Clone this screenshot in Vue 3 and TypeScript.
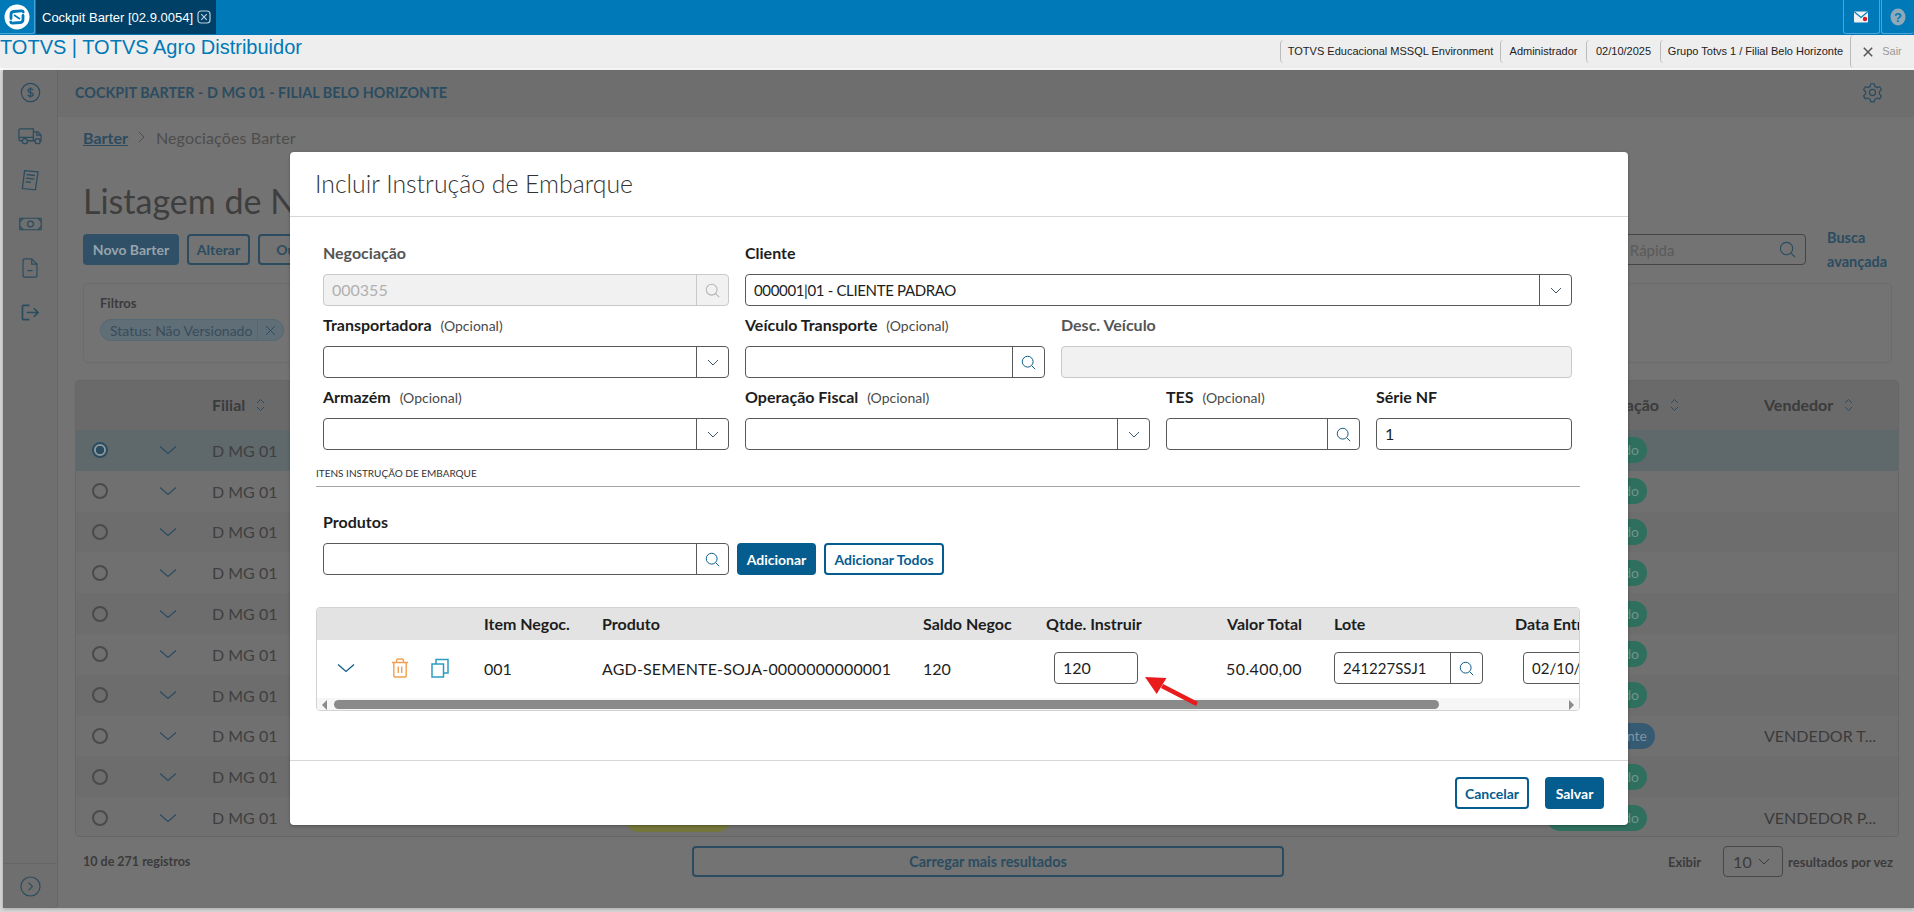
<script setup lang="ts">
interface Row { pill: string; kind: string; vendor: string; extra?: boolean }
const rows: Row[] = [
  { pill: 'Aprovado', kind: 'green', vendor: '' },
  { pill: 'Aprovado', kind: 'green', vendor: '' },
  { pill: 'Aprovado', kind: 'green', vendor: '' },
  { pill: 'Aprovado', kind: 'green', vendor: '' },
  { pill: 'Aprovado', kind: 'green', vendor: '' },
  { pill: 'Aprovado', kind: 'green', vendor: '' },
  { pill: 'Aprovado', kind: 'green', vendor: '' },
  { pill: 'Pendente', kind: 'blue', vendor: 'VENDEDOR T...' },
  { pill: 'Aprovado', kind: 'green', vendor: '' },
  { pill: 'Aprovado', kind: 'green', vendor: 'VENDEDOR P...', extra: true },
]
</script>

<template>
  <div class="screen">
    <header class="topbar">
      <div class="logo-cell">
        <svg width="26" height="26" viewBox="0 0 26 26">
          <circle cx="13" cy="13" r="12.5" fill="#fff" />
          <path d="M7 14.500V10.500Q7 7.800 9.600 7.500L17.500 6.800Q19 6.700 19.300 8M19 11.500V15.500Q19 18.200 16.400 18.500L8.500 19.200Q7 19.300 6.700 18" fill="none" stroke="#0079b8" stroke-width="2.800" stroke-linecap="round" />
          <path d="M10 11 16 15" fill="none" stroke="#0079b8" stroke-width="1.600" />
        </svg>
      </div>
      <div class="tab">
        <span>Cockpit Barter [02.9.0054]</span>
        <svg width="14" height="14" viewBox="0 0 14 14" fill="none" stroke="#b9cfdc" stroke-width="1.2">
          <rect x="1" y="1" width="12" height="12" rx="3" />
          <path d="M4.2 4.2 9.8 9.8M9.8 4.2 4.2 9.8" />
        </svg>
      </div>
      <div class="top-spacer"></div>
      <div class="top-btn">
        <svg width="15" height="12" viewBox="0 0 15 12">
          <rect width="14" height="11" y="0.5" rx="1" fill="#f1f1f1" />
          <path d="M0.5 1 7 6.5 13.5 1" fill="none" stroke="#0079b8" stroke-width="1.1" />
          <circle cx="11" cy="8" r="2.2" fill="#e01b24" />
        </svg>
      </div>
      <div class="top-btn help">
        <svg width="16" height="18" viewBox="0 0 16 18">
          <ellipse cx="8" cy="9" rx="7.5" ry="8.5" fill="#8fa9b9" />
          <text x="8" y="14" text-anchor="middle" class="help-q">?</text>
        </svg>
      </div>
    </header>

    <div class="subbar">
      <div class="brand">TOTVS | TOTVS Agro Distribuidor</div>
      <div class="sub-items">
        <span class="sub-item w1">TOTVS Educacional MSSQL Environment</span>
        <span class="sub-item w2">Administrador</span>
        <span class="sub-item w3">02/10/2025</span>
        <span class="sub-item w4">Grupo Totvs 1 / Filial Belo Horizonte</span>
        <span class="sub-item exit">
          <svg width="10" height="10" viewBox="0 0 10 10" fill="none" stroke="#555" stroke-width="1.5"><path d="M.8.8 9.2 9.2M9.2.8.8 9.2" /></svg>
          <em>Sair</em>
        </span>
      </div>
    </div>

    <div class="app">
      <aside class="sidebar">
        <div class="side-icons">
          <span class="si"><svg width="21" height="21" viewBox="0 0 24 24" fill="none" stroke="#2b4c60" stroke-width="1.400">
            <circle cx="12" cy="12" r="10.500" />
            <path d="M15 9.300c-.5-1-1.600-1.500-3-1.500-1.700 0-3 .8-3 2.100 0 3 6.200 1.300 6.200 4.400 0 1.300-1.400 2-3.200 2-1.500 0-2.700-.6-3.200-1.700M12 6v12" />
          </svg></span>
          <span class="si"><svg width="24" height="17" viewBox="0 0 28 20" fill="none" stroke="#2b4c60" stroke-width="1.500">
            <path d="M5 15H2.500A1.500 1.500 0 0 1 1 13.500V2.500A1.500 1.500 0 0 1 2.500 1h15.500v14H11M18 4.500h5.500l3.500 4V15h-1M18 15h2.500M1 11h17M22 4.500v4h5" />
            <circle cx="8" cy="15.500" r="3" /><circle cx="23" cy="15.500" r="3" />
          </svg></span>
          <span class="si"><svg width="18" height="22" viewBox="0 0 20 24" fill="none" stroke="#2b4c60" stroke-width="1.400">
            <path d="M4 1.500 19 3 16 23 1.500 21.500Z" />
            <path d="M6 6 15.500 7M5.500 10 15 11M5 14l6 .5" />
          </svg></span>
          <span class="si"><svg width="23" height="14" viewBox="0 0 28 16" fill="none" stroke="#2b4c60" stroke-width="1.500">
            <path d="M7 1H1v14h6M21 1h6v14h-6M7 1h14M7 15h14" />
            <circle cx="14" cy="8" r="3.500" />
            <path d="M1 5l4-4M27 5l-4-4M1 11l4 4M27 11l-4 4" />
          </svg></span>
          <span class="si"><svg width="16" height="20" viewBox="0 0 18 23" fill="none" stroke="#2b4c60" stroke-width="1.400">
            <path d="M11 1H2.500A1.500 1.500 0 0 0 1 2.500v18A1.500 1.500 0 0 0 2.500 22h13a1.500 1.500 0 0 0 1.500-1.500V7ZM11 1v6h6M6 14.500h6" />
          </svg></span>
          <span class="si"><svg width="19" height="17" viewBox="0 0 20 18" fill="none" stroke="#2b4c60" stroke-width="1.800">
            <path d="M9 1.500H2.500a1 1 0 0 0-1 1v13a1 1 0 0 0 1 1H9M6 9h12M13.500 4.500 18 9l-4.500 4.500" />
          </svg></span>
        </div>
        <div class="side-foot">
          <svg width="21" height="21" viewBox="0 0 22 22" fill="none" stroke="#2b4c60" stroke-width="1.200">
            <circle cx="11" cy="11" r="10" /><path d="m9 7 4 4-4 4" />
          </svg>
        </div>
      </aside>

      <main class="main">
        <div class="main-head">
          <span>COCKPIT BARTER - D MG 01 - FILIAL BELO HORIZONTE</span>
          <svg width="21" height="21" viewBox="0 0 24 24" fill="none" stroke="#2b4c60" stroke-width="1.400">
            <circle cx="12" cy="12" r="3.500" />
            <path d="M10 2h4l.7 3 2.500 1.400 3-1 2 3.400-2.300 2.100v2.900l2.300 2.100-2 3.400-3-1-2.500 1.400-.7 3h-4l-.7-3-2.500-1.400-3 1-2-3.400 2.300-2.100v-2.900L1.800 8.800l2-3.400 3 1 2.500-1.400Z" stroke-linejoin="round" />
          </svg>
        </div>
        <div class="crumb">
          <a>Barter</a>
          <svg width="10" height="14" viewBox="0 0 10 14" fill="none" stroke="#4d4d4d" stroke-width="1"><path d="m2 2 5 5-5 5" /></svg>
          <span>Negociações Barter</span>
        </div>
        <h1 class="page-title">Listagem de Negociações</h1>
        <div class="actions">
          <div class="act-left">
            <button class="bg-btn solid">Novo Barter</button>
            <button class="bg-btn w-alt">Alterar</button>
            <button class="bg-btn w-out">Outras Ações</button>
          </div>
          <div class="quick">
            <span>Busca Rápida</span>
            <svg width="17" height="17" viewBox="0 0 18 18" fill="none" stroke="#2b4c60" stroke-width="1.200"><circle cx="8" cy="8" r="6.500" /><path d="m13 13 4 4" /></svg>
          </div>
          <a class="adv">Busca<br />avançada</a>
        </div>
        <section class="filters">
          <b>Filtros</b>
          <div class="chip">
            <span>Status: Não Versionado</span>
            <i><svg width="11" height="11" viewBox="0 0 11 11" fill="none" stroke="#2b4c60" stroke-width="1"><path d="m1 1 9 9M10 1l-9 9" /></svg></i>
          </div>
        </section>
        <section class="grid">
          <div class="g-head g-row">
            <span></span><span></span>
            <span class="sortable">Filial
              <svg width="9" height="14" viewBox="0 0 9 14" fill="none" stroke="#2b4c60" stroke-width="1"><path d="m1 5 3.500-3.500L8 5M1 9l3.500 3.500L8 9" /></svg>
            </span>
            <span></span>
            <span class="sortable">Situação
              <svg width="9" height="14" viewBox="0 0 9 14" fill="none" stroke="#2b4c60" stroke-width="1"><path d="m1 5 3.500-3.500L8 5M1 9l3.500 3.500L8 9" /></svg>
            </span>
            <span class="sortable">Vendedor
              <svg width="9" height="14" viewBox="0 0 9 14" fill="none" stroke="#2b4c60" stroke-width="1"><path d="m1 5 3.500-3.500L8 5M1 9l3.500 3.500L8 9" /></svg>
            </span>
          </div>
          <div v-for="(r, i) in rows" :key="i" class="g-row g-body" :class="{ sel: i === 0, odd: i % 2 === 1 }">
            <span class="radio" :class="{ on: i === 0 }"></span>
            <svg class="row-chev" width="18" height="10" viewBox="0 0 18 10" fill="none" stroke="#2b4c60" stroke-width="1.200"><path d="m1 1.500 8 7 8-7" /></svg>
            <span class="filial">D MG 01</span>
            <span class="mid"><em v-if="r.extra" class="yellow">Vigente</em></span>
            <span class="pill-cell"><em class="pill" :class="r.kind">{{ r.pill }}</em></span>
            <span class="vendor">{{ r.vendor }}</span>
          </div>
        </section>
        <footer class="foot">
          <span class="count">10 de 271 registros</span>
          <button class="more">Carregar mais resultados</button>
          <div class="per">
            <span>Exibir</span>
            <div class="per-sel"><span>10</span>
              <svg width="12" height="7" viewBox="0 0 12 7" fill="none" stroke="#3a3a3a" stroke-width="1"><path d="m1 1 5 5 5-5" /></svg>
            </div>
            <span>resultados por vez</span>
          </div>
        </footer>
      </main>
    </div>

    <div class="modal">
      <div class="m-head">Incluir Instrução de Embarque</div>
      <div class="m-body">
        <div class="f-row r1">
          <div class="field disabled">
            <label>Negociação</label>
            <div class="ctl"><span class="val">000355</span>
              <i class="addon"><svg width="15" height="15" viewBox="0 0 18 18" fill="none" stroke="#b5b5b5" stroke-width="1.300"><circle cx="8" cy="8" r="6.500" /><path d="m13 13 4 4" /></svg></i>
            </div>
          </div>
          <div class="field">
            <label>Cliente</label>
            <div class="ctl"><span class="val cli">000001|01 - CLIENTE PADRAO</span>
              <i class="addon"><svg width="12" height="7" viewBox="0 0 12 7" fill="none" stroke="#3d5a6c" stroke-width="1"><path d="m1 1 5 5 5-5" /></svg></i>
            </div>
          </div>
        </div>
        <div class="f-row r2">
          <div class="field">
            <label>Transportadora <small>(Opcional)</small></label>
            <div class="ctl"><span class="val"></span>
              <i class="addon"><svg width="12" height="7" viewBox="0 0 12 7" fill="none" stroke="#3d5a6c" stroke-width="1"><path d="m1 1 5 5 5-5" /></svg></i>
            </div>
          </div>
          <div class="field">
            <label>Veículo Transporte <small>(Opcional)</small></label>
            <div class="ctl"><span class="val"></span>
              <i class="addon"><svg width="15" height="15" viewBox="0 0 18 18" fill="none" stroke="#0c5c88" stroke-width="1.200"><circle cx="8" cy="8" r="6.500" /><path d="m13 13 4 4" /></svg></i>
            </div>
          </div>
          <div class="field disabled">
            <label>Desc. Veículo</label>
            <div class="ctl"><span class="val"></span></div>
          </div>
        </div>
        <div class="f-row r3">
          <div class="field">
            <label>Armazém <small>(Opcional)</small></label>
            <div class="ctl"><span class="val"></span>
              <i class="addon"><svg width="12" height="7" viewBox="0 0 12 7" fill="none" stroke="#3d5a6c" stroke-width="1"><path d="m1 1 5 5 5-5" /></svg></i>
            </div>
          </div>
          <div class="field">
            <label>Operação Fiscal <small>(Opcional)</small></label>
            <div class="ctl"><span class="val"></span>
              <i class="addon"><svg width="12" height="7" viewBox="0 0 12 7" fill="none" stroke="#3d5a6c" stroke-width="1"><path d="m1 1 5 5 5-5" /></svg></i>
            </div>
          </div>
          <div class="field">
            <label>TES <small>(Opcional)</small></label>
            <div class="ctl"><span class="val"></span>
              <i class="addon"><svg width="15" height="15" viewBox="0 0 18 18" fill="none" stroke="#0c5c88" stroke-width="1.200"><circle cx="8" cy="8" r="6.500" /><path d="m13 13 4 4" /></svg></i>
            </div>
          </div>
          <div class="field">
            <label>Série NF</label>
            <div class="ctl"><span class="val">1</span></div>
          </div>
        </div>
        <div class="section-title">ITENS INSTRUÇÃO DE EMBARQUE</div>
        <div class="prod">
          <label>Produtos</label>
          <div class="prod-line">
            <div class="ctl prod-ctl"><span class="val"></span>
              <i class="addon"><svg width="15" height="15" viewBox="0 0 18 18" fill="none" stroke="#0c5c88" stroke-width="1.200"><circle cx="8" cy="8" r="6.500" /><path d="m13 13 4 4" /></svg></i>
            </div>
            <button class="btn primary add">Adicionar</button>
            <button class="btn outline addall">Adicionar Todos</button>
          </div>
        </div>
        <div class="items">
          <div class="i-row i-head">
            <span></span><span>Item Negoc.</span><span>Produto</span><span>Saldo Negoc</span><span>Qtde. Instruir</span><span class="right">Valor Total</span><span>Lote</span><span class="clip">Data Entrega</span>
          </div>
          <div class="i-row i-data">
            <span class="row-actions">
              <svg class="a1" width="18" height="10" viewBox="0 0 18 10" fill="none" stroke="#0c5c88" stroke-width="1.300"><path d="m1 1.500 8 7 8-7" /></svg>
              <svg class="a2" width="18" height="20" viewBox="0 0 18 20" fill="none" stroke="#f0a04e" stroke-width="1.400">
                <path d="M1 4.500h16M2.800 4.500V18a1 1 0 0 0 1 1h10.400a1 1 0 0 0 1-1V4.500M5.500 4.500V3a2 2 0 0 1 2-2h3a2 2 0 0 1 2 2v1.500M7.300 8.500v6.500M10.700 8.500v6.500" />
              </svg>
              <svg class="a3" width="18" height="20" viewBox="0 0 18 20" fill="none" stroke="#2a9cc4" stroke-width="1.500">
                <rect x="1" y="6" width="11.500" height="13" /><path d="M5 6V1.500h12V15h-4.500" />
              </svg>
            </span>
            <span>001</span>
            <span class="prod-name">AGD-SEMENTE-SOJA-0000000000001</span>
            <span>120</span>
            <span class="pad"><div class="ctl qty"><span class="val">120</span></div></span>
            <span class="right money">50.400,00</span>
            <span><div class="ctl lote"><span class="val small-val">241227SSJ1</span>
              <i class="addon"><svg width="15" height="15" viewBox="0 0 18 18" fill="none" stroke="#0c5c88" stroke-width="1.200"><circle cx="8" cy="8" r="6.500" /><path d="m13 13 4 4" /></svg></i>
            </div></span>
            <span class="pad clip"><div class="ctl date"><span class="val small-val">02/10/2025</span></div></span>
          </div>
          <div class="scroll">
            <i class="arrow left"></i>
            <div class="track"><div class="thumb"></div></div>
            <i class="arrow rgt"></i>
          </div>
        </div>
      </div>
      <div class="m-foot">
        <button class="btn outline cancel">Cancelar</button>
        <button class="btn primary save">Salvar</button>
      </div>
    </div>

    <svg class="callout" width="62" height="38" viewBox="0 0 62 38">
      <path d="M22 14 57 32" stroke="#e81c1c" stroke-width="4.500" fill="none" />
      <path d="M5 5 26.500 6 16.700 22Z" fill="#e81c1c" />
    </svg>
  </div>
</template>

<style>
html, body { margin: 0; background: #d9d9d9; overflow: hidden; }
</style>

<style scoped>
.screen { position: relative; width: 1914px; height: 912px; overflow: hidden; font-family: "Lato", "Noto Sans", sans-serif; color: #1d1d1d; }
button { font-family: inherit; cursor: pointer; }
i, em { font-style: normal; }

.topbar { display: flex; height: 35px; background: #0079b8; }
.logo-cell { width: 35px; height: 34px; display: flex; align-items: center; justify-content: center; border-right: 1px solid #4aa6da; border-bottom: 1px solid #4aa6da; box-sizing: border-box; border-radius: 0 0 3px 0; }
.tab { margin-left: 1px; width: 180px; height: 34px; background: #003f66; color: #fff; display: flex; align-items: center; padding-left: 6px; gap: 4px; box-sizing: border-box; font: 13px "Liberation Sans", sans-serif; white-space: nowrap; }
.top-spacer { flex: 1; }
.top-btn { width: 37px; height: 34px; display: flex; align-items: center; justify-content: center; border: 1px solid #4aa6da; border-top: 0; box-sizing: border-box; border-radius: 0 0 3px 3px; margin-right: 1px; }
.top-btn.help { width: 33px; margin: 0; border-right: 0; }
.help-q { font: bold 13px "Liberation Sans", sans-serif; fill: #0079b8; }

.subbar { height: 33px; background: #eeeeee; display: flex; justify-content: space-between; border-bottom: 2px solid #fff; font-family: "Liberation Sans", sans-serif; box-sizing: content-box; }
.brand { font-size: 20px; color: #0079b8; line-height: 25px; height: 25px; white-space: nowrap; }
.sub-items { display: flex; height: 33px; align-items: center; }
.sub-item { font-size: 11px; color: #222; height: 23px; line-height: 23px; border-left: 1px solid #bbb; border-radius: 4px 0 0 4px; box-sizing: border-box; white-space: nowrap; text-align: center; }
.w1 { width: 220px; } .w2 { width: 86px; } .w3 { width: 74px; } .w4 { width: 190px; }
.sub-item.exit { width: 64px; height: 33px; display: flex; align-items: center; justify-content: center; gap: 9px; color: #999; }

.app { display: flex; height: 838px; margin-left: 3px; background: #737373; box-shadow: 0 1px 4px rgba(0,0,0,.25); }
.sidebar { width: 55px; flex: none; background: #6f6f6f; border-right: 1px solid #666; box-sizing: border-box; display: flex; flex-direction: column; justify-content: space-between; border-radius: 0 0 4px 0; }
.side-icons { display: flex; flex-direction: column; align-items: center; }
.si { height: 44px; width: 100%; display: flex; align-items: center; justify-content: center; }
.side-foot { height: 44px; border-top: 1px solid #666; display: flex; align-items: center; justify-content: center; }

.main { flex: 1; min-width: 0; color: #3b3b3b; }
.main-head { height: 47px; background: #6e6e6e; display: flex; align-items: center; justify-content: space-between; padding: 0 31px 2px 17px; box-sizing: border-box; font-size: 14.400px; font-weight: 700; color: #2b4c60; }
.crumb { height: 42px; display: flex; align-items: center; gap: 9px; padding: 0 0 2px 25px; box-sizing: border-box; font-size: 16px; color: #4d4d4d; }
.crumb a { color: #2b4c60; font-weight: 700; text-decoration: underline; }
.crumb span { letter-spacing: .15px; }
.page-title { margin: 0; height: 75px; padding-left: 25px; font-size: 34px; font-weight: 400; line-height: 84px; color: #3e3e3e; box-sizing: border-box; white-space: nowrap; }
.actions { height: 31px; display: flex; align-items: center; padding-left: 25px; }
.act-left { display: flex; gap: 8px; }
.bg-btn { height: 31px; border: 2px solid #2b4c60; background: transparent; border-radius: 4px; color: #2b4c60; font-size: 14px; font-weight: 700; padding: 0; }
.bg-btn.solid { width: 96px; background: #2f5067; border-color: #2f5067; color: #98a4ac; }
.w-alt { width: 63px; } .w-out { width: 120px; }
.quick { margin-left: auto; width: 230px; height: 31px; border: 1px solid #454545; border-radius: 4px; box-sizing: border-box; display: flex; align-items: center; justify-content: space-between; padding: 0 9px 0 10px; font-size: 15px; color: #5a5a5a; white-space: nowrap; }
.adv { width: 87px; margin-left: 21px; font-size: 14.500px; line-height: 24px; font-weight: 700; color: #2b4c60; }
.filters { margin: 18px 22px 17px 25px; height: 80px; border: 1px solid #6c6c6c; border-radius: 4px; box-sizing: border-box; padding: 11px 16px; }
.filters b { display: block; font-size: 13px; font-weight: 700; color: #3b3b3b; height: 24px; }
.chip { display: inline-flex; align-items: center; height: 22px; background: #606e77; border: 1px solid #546873; border-radius: 11px; box-sizing: border-box; font-size: 14px; color: #384d5b; padding-left: 9px; }
.chip i { margin-left: 5px; width: 25px; height: 20px; display: flex; align-items: center; justify-content: center; border-left: 1px solid #546873; }
.grid { margin: 0 15px 0 17px; height: 457px; border: 1px solid #666; border-radius: 4px; box-sizing: border-box; overflow: hidden; }
.g-row { display: grid; grid-template-columns: 67px 69px 410px 1fr 166px 134px; align-items: center; }
.g-head { height: 49px; background: #6a6a6a; font-weight: 700; font-size: 16px; color: #3b3b3b; padding-bottom: 2px; box-sizing: border-box; }
.sortable { display: inline-flex; align-items: center; gap: 11px; }
.g-body { height: 40.800px; background: #6d6d6d; font-size: 16px; }
.g-body.odd { background: #707070; }
.g-body.sel { background: #5f686b; }
.g-row > .radio { justify-self: start; margin-left: 16px; }
.row-chev { margin-left: 16px; }
.radio { width: 16px; height: 16px; border: 2px solid #4a4a4a; border-radius: 50%; box-sizing: border-box; display: block; }
.radio.on { border-color: #2b4c60; background: radial-gradient(circle, #2b4c60 0 4px, #8c979c 4.500px); }
.filial { color: #3f3f3f; }
.mid { padding-left: 3px; font-size: 14px; }
.yellow { display: inline-block; width: 106px; height: 28px; line-height: 28px; border-radius: 14px; background: #74763a; text-align: center; }
.pill-cell { position: relative; height: 26px; width: 166px; }
.pill { position: absolute; right: 117px; top: 0; width: 100px; height: 26px; padding-right: 8px; box-sizing: border-box; line-height: 26px; border-radius: 13px; text-align: right; color: #72958a; font-size: 14px; }
.pill.green { background: #2e6f5d; }
.pill.blue { background: #365a72; color: #7f95a5; right: 109px; }
.vendor { color: #3b3b3b; font-size: 16px; white-space: nowrap; }
.foot { height: 71px; padding: 9px 21px 0 25px; box-sizing: border-box; display: flex; align-items: flex-start; font-size: 12.500px; font-weight: 700; color: #3b3b3b; }
.count { width: 609px; line-height: 31px; flex: none; }
.more { width: 592px; height: 31px; flex: none; background: transparent; border: 2px solid #2b4c60; border-radius: 4px; color: #2b4c60; font-size: 14.400px; font-weight: 700; }
.per { display: flex; align-items: center; gap: 8px; height: 31px; margin-left: auto; white-space: nowrap; font-size: 13px; }
.per-sel { width: 60px; height: 31px; margin: 0 -3px 0 14px; border: 1px solid #484848; border-radius: 4px; box-sizing: border-box; display: flex; align-items: center; justify-content: space-between; padding: 0 12px 0 9px; font-size: 16px; font-weight: 400; }

.modal { position: absolute; left: 290px; top: 152px; width: 1338px; height: 673px; background: #fff; border-radius: 4px; display: flex; flex-direction: column; box-shadow: 0 1px 3px rgba(0,0,0,.3); }
.m-head { height: 65px; flex: none; border-bottom: 1px solid #d6d6d6; box-sizing: border-box; padding-left: 25px; line-height: 64px; font-size: 24.800px; font-weight: 300; color: #333; }
.m-body { flex: 1; padding: 26px 56px 0 33px; }
.m-foot { height: 65px; flex: none; border-top: 1px solid #d6d6d6; box-sizing: border-box; display: flex; justify-content: flex-end; gap: 16px; padding: 16px 24px 0 0; }
.f-row { display: grid; gap: 16px; margin-bottom: 9px; }
.r1 { grid-template-columns: 406px 1fr; }
.r2 { grid-template-columns: 406px 300px 1fr; }
.r3 { grid-template-columns: 406px 405px 194px 1fr; }
.field label, .prod label { display: block; height: 20px; line-height: 20px; margin-bottom: 11px; font-size: 16px; font-weight: 700; color: #1d1d1d; white-space: nowrap; }
.field small { font-size: 14px; font-weight: 400; color: #4a4a4a; margin-left: 5px; }
.field.disabled label { color: #555; }
.ctl { height: 32px; border: 1px solid #58595b; border-radius: 4px; box-sizing: border-box; display: flex; align-items: center; background: #fff; overflow: hidden; }
.val { flex: 1; padding-left: 8px; font-size: 16px; line-height: 18px; padding-bottom: 1px; color: #1d1d1d; white-space: nowrap; }
.cli { font-size: 15px; letter-spacing: -.35px; }
.small-val { font-size: 15px; }
.addon { width: 32px; height: 100%; flex: none; border-left: 1px solid #58595b; display: flex; align-items: center; justify-content: center; box-sizing: border-box; }
.disabled .ctl { background: #f1f1f1; border-color: #c9c9c9; }
.disabled .val { color: #b0b0b0; }
.disabled .addon { border-color: #c9c9c9; }
.section-title { margin: 15px -8px 0 -7px; height: 20px; padding-top: 1px; border-bottom: 1px solid #a5a5a5; font-size: 10px; line-height: 14px; color: #333; box-sizing: content-box; }
.prod { margin-top: 25px; }
.prod-line { display: flex; gap: 8px; }
.prod-ctl { width: 406px; }
.btn { height: 32px; border-radius: 4px; font-size: 14px; font-weight: 700; box-sizing: border-box; padding: 0; }
.primary { background: #055c8e; border: 0; color: #fff; }
.outline { background: #fff; border: 2px solid #055c8e; color: #055c8e; }
.add { width: 79px; }
.addall { width: 120px; }
.cancel { width: 74px; }
.save { width: 59px; }
.items { margin: 32px -8px 0 -7px; height: 104px; border: 1px solid #d2d2d2; border-radius: 4px; box-sizing: border-box; overflow: hidden; }
.i-row { display: grid; grid-template-columns: 167px 118px 321px 123px 173px 83px 32px 181px 200px; white-space: nowrap; align-items: center; font-size: 16px; box-sizing: border-box; }
.i-row > :nth-child(7) { grid-column: 8; }
.i-row > :nth-child(8) { grid-column: 9; }
.i-head { height: 32px; padding-bottom: 2px; background: #e3e3e3; font-weight: 700; color: #1d1d1d; }
.i-data { height: 58px; padding-bottom: 2px; background: #fff; }
.prod-name { letter-spacing: .17px; }
.money { letter-spacing: .4px; }
.right { text-align: right; }
.pad { padding-left: 8px; }
.clip { overflow: hidden; }
.row-actions { display: flex; align-items: center; height: 100%; }
.a1 { margin-left: 20px; }
.a2 { margin-left: 36px; }
.a3 { margin-left: 22px; }
.qty { width: 84px; }
.lote { width: 149px; }
.date { width: 120px; }
.scroll { height: 13px; display: flex; align-items: center; background: #f6f6f6; padding: 0 5px; }
.arrow { width: 0; height: 0; border: 5px solid transparent; }
.arrow.left { border-right-color: #8a8a8a; border-left: 0; }
.arrow.rgt { border-left-color: #8a8a8a; border-right: 0; }
.track { flex: 1; padding: 0 6px 0 7px; }
.thumb { width: 1105px; height: 9px; border-radius: 5px; background: #8a8a8a; }

.callout { position: absolute; left: 1140px; top: 672px; }
</style>
